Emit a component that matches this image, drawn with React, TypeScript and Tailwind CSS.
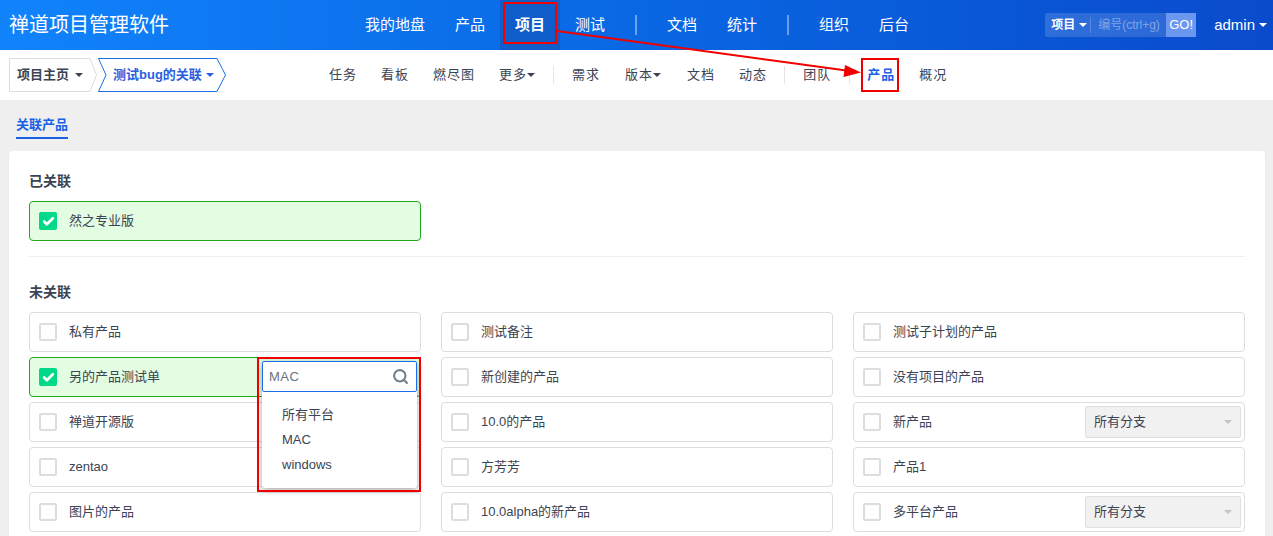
import { Check, Search } from "lucide-react";

const font = "font-['Liberation_Sans','Noto_Sans_CJK_SC',sans-serif]";

type Product = {
	name: string;
	checked?: boolean;
	branch?: boolean;
	platform?: boolean;
};

const products: Product[] = [
	{ name: "私有产品" },
	{ name: "测试备注" },
	{ name: "测试子计划的产品" },
	{ name: "另的产品测试单", checked: true, platform: true },
	{ name: "新创建的产品" },
	{ name: "没有项目的产品" },
	{ name: "禅道开源版" },
	{ name: "10.0的产品" },
	{ name: "新产品", branch: true },
	{ name: "zentao" },
	{ name: "方芳芳" },
	{ name: "产品1" },
	{ name: "图片的产品" },
	{ name: "10.0alpha的新产品" },
	{ name: "多平台产品", branch: true },
];

function Caret({ className }: { className: string }) {
	return (
		<span
			className={`inline-block h-0 w-0 border-x-[4px] border-t-[4px] border-x-transparent ${className}`}
		/>
	);
}

function TopItem({ label, active }: { label: string; active?: boolean }) {
	return (
		<a
			className={`flex h-[50px] items-center px-[15px] text-[15px] ${
				active ? "bg-[#0f5ccb] font-bold" : ""
			}`}
		>
			{label}
		</a>
	);
}

function TopSep() {
	return <span className="mx-[15px] h-5 w-[2px] bg-white/40" />;
}

function SubItem({
	label,
	caret,
	active,
	className = "",
}: {
	label: string;
	caret?: boolean;
	active?: boolean;
	className?: string;
}) {
	return (
		<a
			className={`flex items-center px-3 text-[13px] tracking-[1px] ${
				active ? "font-bold text-[#1a5fe8]" : "text-[#3c4353]"
			} ${className}`}
		>
			{label}
			{caret && <Caret className="border-t-[#3c4353]" />}
		</a>
	);
}

function SubSep({ className = "mx-[6px]" }: { className?: string }) {
	return <span className={`h-[18px] w-px bg-[#e5e5e5] ${className}`} />;
}

function Box({ checked }: { checked?: boolean }) {
	if (checked) {
		return (
			<span className="flex h-[18px] w-[18px] shrink-0 items-center justify-center rounded-[2px] bg-[#00da88]">
				<Check size={13} strokeWidth={5} className="text-white" />
			</span>
		);
	}
	return <span className="h-[18px] w-[18px] shrink-0 rounded-[2px] border-2 border-[#dddddd] bg-white" />;
}

function PlatformMenu() {
	return (
		<>
			<div className="absolute top-[3px] right-[3px] z-10 h-[127px] w-[155px] rounded-[3px] bg-white text-[13px] text-[#3c4353] shadow-[0_2px_6px_rgba(0,0,0,0.35)]">
				<div className="flex h-[31px] items-center justify-between rounded-[2px] border border-[#1a6fe8] bg-white pr-[7px] pl-[6px]">
					<span className="tracking-[0.5px] text-[#6b7280]">MAC</span>
					<Search size={17} strokeWidth={3} className="text-[#75808f]" />
				</div>
				<ul className="pt-[10px] pl-5">
					<li className="h-[25px] leading-[25px]">所有平台</li>
					<li className="h-[25px] leading-[25px]">MAC</li>
					<li className="h-[25px] leading-[25px]">windows</li>
				</ul>
			</div>
			<div className="absolute -top-px -right-px z-20 h-[135px] w-[164px] border-2 border-[#f00000]" />
		</>
	);
}

function ProductRow({ name, checked, branch, platform }: Product) {
	return (
		<div
			className={`relative flex h-10 items-center rounded-[4px] border pl-[9px] text-[13px] text-[#3c4353] ${
				checked ? "border-[#22a722] bg-[#e3fde3]" : "border-[#dddddd] bg-white"
			}`}
		>
			<Box checked={checked} />
			<span className="ml-3">{name}</span>
			{branch && (
				<div className="mr-[3px] ml-auto flex h-8 w-[156px] items-center justify-between rounded-[2px] border border-[#e0e0e0] bg-[#f1f1f1] pr-[8px] pl-2">
					<span>所有分支</span>
					<Caret className="border-t-[#c4c4c4]" />
				</div>
			)}
			{platform && <PlatformMenu />}
		</div>
	);
}

export default function App() {
	return (
		<div className={`relative h-[536px] w-[1273px] overflow-hidden bg-[#efefef] ${font}`}>
			<header className="flex h-[50px] items-center bg-gradient-to-r from-[#1183fb] to-[#0a4bcc] text-white">
				<div className="w-[350px] pl-[9px] text-[20px] leading-none">禅道项目管理软件</div>
				<nav className="flex items-center">
					<TopItem label="我的地盘" />
					<TopItem label="产品" />
					<TopItem label="项目" active />
					<TopItem label="测试" />
					<TopSep />
					<TopItem label="文档" />
					<TopItem label="统计" />
					<TopSep />
					<TopItem label="组织" />
					<TopItem label="后台" />
				</nav>
				<div className="ml-[121px] flex h-6 w-[151px] items-center rounded-[2px] bg-white/15 text-xs">
					<span className="ml-[6px] font-bold">项目</span>
					<Caret className="ml-1 border-t-white" />
					<span className="ml-[3px] h-4 w-px bg-white/20" />
					<span className="ml-[7px] text-white/40">编号(ctrl+g)</span>
					<span className="ml-auto flex h-6 w-[30px] items-center justify-center bg-[#6b97f0] text-[13px]">
						GO!
					</span>
				</div>
				<div className="ml-[18px] flex items-center gap-1 text-[15px]">
					admin
					<Caret className="border-t-white" />
				</div>
			</header>

			<div className="flex h-[50px] items-center bg-white pl-[9px]">
				<a className="relative flex h-[34px] w-[88px] items-center pl-[8px] text-[13px] font-bold text-[#3c4353]">
					<svg className="absolute inset-0" width="88" height="34" viewBox="0 0 88 34">
						<polygon points="0.5,0.5 81,0.5 87.5,17 81,33.5 0.5,33.5" fill="white" stroke="#dddddd" />
					</svg>
					<span className="relative">项目主页</span>
					<Caret className="relative ml-[6px] border-t-[#3c4353]" />
				</a>
				<a className="relative ml-px flex h-[34px] w-[128px] items-center pl-[15px] text-[13px] font-bold text-[#2b5fe0]">
					<svg className="absolute inset-0" width="128" height="34" viewBox="0 0 128 34">
						<polygon points="0.5,0.5 119,0.5 127.5,17 119,33.5 0.5,33.5 8,17" fill="white" stroke="#1a6fe8" />
					</svg>
					<span className="relative">测试bug的关联</span>
					<Caret className="relative ml-1 border-t-[#2b5fe0]" />
				</a>
				<nav className="ml-[91px] flex items-center">
					<SubItem label="任务" />
					<SubItem label="看板" />
					<SubItem label="燃尽图" />
					<SubItem label="更多" caret />
					<SubSep />
					<SubItem label="需求" />
					<SubItem label="版本" caret className="mr-[2px] ml-px" />
					<SubItem label="文档" />
					<SubItem label="动态" />
					<SubSep className="mr-[6px] ml-[5px]" />
					<SubItem label="团队" />
					<SubSep className="mx-[5.5px]" />
					<SubItem label="产品" active />
					<SubItem label="概况" />
				</nav>
			</div>

			<div className="flex h-[51px] items-start pt-[17px] pl-4">
				<a className="h-[22px] border-b-2 border-[#1a5fe8] text-[13px] leading-4 font-bold text-[#1a5fe8]">
					关联产品
				</a>
			</div>

			<main className="mx-[9px] h-[400px] w-[1256px] rounded-[4px] bg-white px-5 pt-5 shadow-[0_1px_2px_rgba(0,0,0,0.05)]">
				<h2 className="mb-[10px] text-sm leading-5 font-bold text-[#3c4353]">已关联</h2>
				<div className="grid grid-cols-3 gap-x-5">
					<ProductRow name="然之专业版" checked />
				</div>
				<div className="mt-[15px] mb-[25px] h-px bg-[#eeeeee]" />
				<h2 className="mb-[10px] text-sm leading-5 font-bold text-[#3c4353]">未关联</h2>
				<div className="grid grid-cols-3 gap-x-5 gap-y-[5px]">
					{products.map((p) => (
						<ProductRow key={p.name} {...p} />
					))}
				</div>
			</main>

			{/* red annotations over the page */}
			<div className="absolute top-[2px] left-[503px] h-[42px] w-[54px] border-2 border-[#f00000]" />
			<div className="absolute top-[58px] left-[861px] h-[34px] w-[38px] border-2 border-[#f00000]" />
			<svg className="pointer-events-none absolute inset-0" width="1273" height="536">
				<line x1="557" y1="31" x2="850" y2="71" stroke="#f00000" strokeWidth="2" />
				<polygon points="861,72.5 845,65 843.5,77" fill="#f00000" />
			</svg>
		</div>
	);
}
